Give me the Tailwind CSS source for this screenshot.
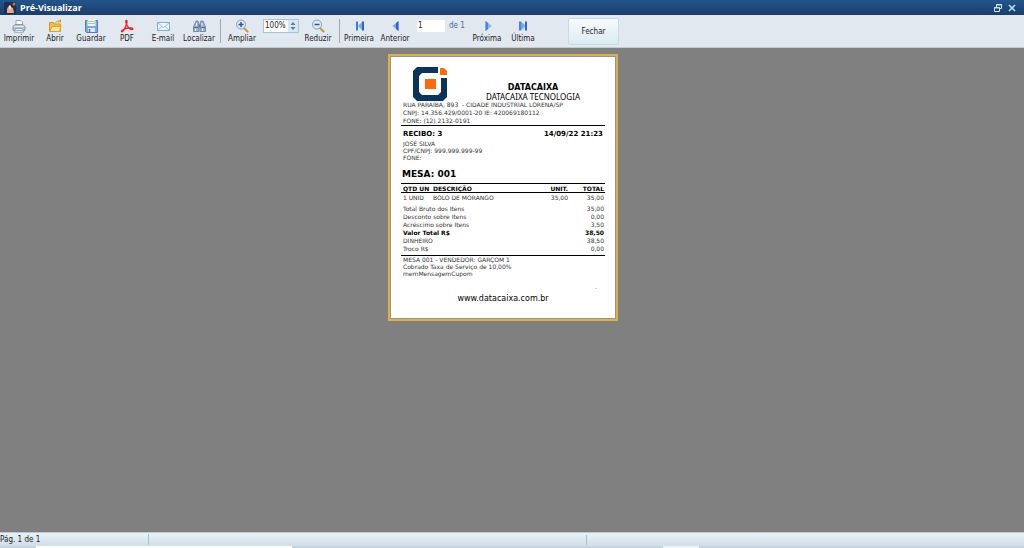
<!DOCTYPE html>
<html lang="pt-BR">
  <head>
    <title>Pré-Visualizar</title>
    <meta charset="UTF-8" />
    <meta name="viewport" content="width=device-width, initial-scale=1.0" />
    <script src="https://cdn.jsdelivr.net/npm/@tailwindcss/browser@4"></script>
  </head>
  <body class="flex flex-col h-screen overflow-hidden bg-[#808080] font-['DejaVu_Sans_Condensed','DejaVu_Sans',sans-serif] text-[8px] leading-[10px] text-[#1c1c1c]">
    <header class="flex items-center h-[15px] shrink-0 px-1 bg-linear-to-b from-[#23558b] to-[#1b3d6b] text-white">
      <svg class="w-3 h-3" viewBox="0 0 12 12">
        <rect width="12" height="12" rx="2" fill="#17324f" />
        <path d="M3 11V7l1-2 2-2 1 2 2 1 1 5z" fill="#f3a583" />
        <path d="M5 5l1-2 1 2-1 3z" fill="#fff" />
        <circle cx="10" cy="2" r="1.5" fill="#f26522" />
      </svg>
      <h1 class="ml-1 flex-1 font-['Open_Sans',sans-serif] text-[9px] font-bold">Pré-Visualizar</h1>
      <button type="button" aria-label="Restaurar" class="mr-1.5">
        <svg class="w-2 h-2" viewBox="0 0 8 8" fill="none" stroke="#c9e3ec">
          <path d="M2.5 3V.5h5v4H6M2 1h6" />
          <path d="M.5 3.5h5v4h-5zM0 4h6" />
        </svg>
      </button>
      <button type="button" aria-label="Fechar janela" class="mr-1">
        <svg class="w-2 h-2" viewBox="0 0 8 8" fill="none" stroke="#b9e0ea" stroke-width="1.6">
          <path d="M1 1l6 6M7 1L1 7" />
        </svg>
      </button>
    </header>

    <nav class="flex h-[33px] shrink-0 pl-px pt-1 bg-[#e1e8f0] border-b border-[#c3cad2]">
      <button type="button" class="flex flex-col items-center gap-px w-9 shrink-0">
        <svg class="w-3.5 h-3.5" viewBox="0 0 14 14">
          <path d="M4 6V1.500h5L10.500 3v3" fill="#fff" stroke="#86a6cf" />
          <path d="M3 5.500h8l2 2v3.500l-1 1H2l-1-1V7.500z" fill="#b9c1cd" stroke="#7c8694" stroke-width=".8" />
          <path d="M2 7.500h10" stroke="#e6eaf0" />
          <path d="M3.500 9.500h7l.8 3.800H2.700z" fill="#f4f9ff" stroke="#8594a8" stroke-width=".8" />
          <path d="M4 11.500h6" stroke="#7ab2ee" />
        </svg>
        <span>Imprimir</span>
      </button>
      <button type="button" class="flex flex-col items-center gap-px w-9 shrink-0">
        <svg class="w-3.5 h-3.5" viewBox="0 0 14 14">
          <path d="M1.500 12.500V3.500h4l1 1.500h6v7.500z" fill="#f3bd4b" stroke="#d9951f" />
          <path d="M1.500 12.500L4 7.500h9L11.500 12.500z" fill="#ffe59a" stroke="#dea02c" />
          <path d="M7.500 4c1-2 2.500-2.500 4.500-2M12.500.500v2.500H10" fill="none" stroke="#e58e1a" />
        </svg>
        <span>Abrir</span>
      </button>
      <button type="button" class="flex flex-col items-center gap-px w-9 shrink-0">
        <svg class="w-3.5 h-3.5" viewBox="0 0 14 14">
          <path d="M1.500 1.500h12v12h-11l-1-1z" fill="#7ca7e6" stroke="#5478c4" />
          <path d="M3.500 1h8v6h-8z" fill="#f0f6ee" />
          <path d="M4 2.500h7M4 4.500h7" stroke="#a5cda0" />
          <path d="M4 9h7v4H4z" fill="#dbe6f7" />
          <path d="M5.500 10v3" stroke="#5478c4" stroke-width="1.500" />
        </svg>
        <span>Guardar</span>
      </button>
      <button type="button" class="flex flex-col items-center gap-px w-9 shrink-0">
        <svg class="w-3.5 h-3.5" viewBox="0 0 14 14" fill="none" stroke="#e5252a" stroke-width="1.300">
          <path d="M6.500 1.500c-1.500 0-.5 3 1 5.500s3.500 4 5 3.500c1.500-1-1-2-4-1.500-3 .3-5 1.300-6.500 2.500-1.500 1.500.5 1.800 1.500 0C5 9.500 6.500 6 7 3.500c.2-1.300 0-2-.5-2z" />
        </svg>
        <span>PDF</span>
      </button>
      <button type="button" class="flex flex-col items-center gap-px w-9 shrink-0">
        <svg class="w-3.5 h-3.5" viewBox="0 0 14 14" fill="none">
          <rect x="1.500" y="3.500" width="12" height="8" fill="#edf5fd" stroke="#86addf" />
          <path d="M2 4l5.500 4.500L13 4M2 11l4-3.500M13 11L9 7.500" stroke="#9dc0ea" />
        </svg>
        <span>E-mail</span>
      </button>
      <button type="button" class="flex flex-col items-center gap-px w-9 shrink-0">
        <svg class="w-3.5 h-3.5" viewBox="0 0 14 14">
          <path d="M4 2h2l1 3v7.500H1.500V8zM9 2h2l2.500 6v4.500H8V5z" fill="#9db4cc" stroke="#5d7c9f" stroke-width=".8" />
          <path d="M6.500 5.500h2v3h-2z" fill="#5d7c9f" />
          <path d="M2 8.500h4M9 8.500h4" stroke="#47698f" />
          <path d="M3.500 9.500v2.500M10.500 9.500v2.500M4.500 4v2.500M10 4v2.500" stroke="#e8f1fa" />
        </svg>
        <span>Localizar</span>
      </button>
      <div class="w-px h-6 ml-[3px] shrink-0 bg-[#a3a9b1]"></div>
      <button type="button" class="flex flex-col items-center gap-px w-9 ml-[3px] shrink-0">
        <svg class="w-3.5 h-3.5" viewBox="0 0 14 14">
          <path d="M9.500 9.500l3 3" stroke="#c79a50" stroke-width="2.200" stroke-linecap="round" />
          <circle cx="6" cy="5.500" r="4.500" fill="#dceafb" stroke="#8b9bb0" />
          <path d="M3.500 5.500h5M6 3v5" stroke="#31568f" stroke-width="1.500" />
        </svg>
        <span>Ampliar</span>
      </button>
      <div class="flex w-9 h-3.5 ml-[3px] shrink-0 border border-[#a8c5da] bg-[#d6e7f2]">
        <input type="text" aria-label="Zoom" value="100%" class="w-6 min-w-0 pl-px bg-white text-[8px] leading-3 outline-none" />
        <button type="button" aria-label="Alterar zoom" class="flex flex-1 items-center justify-center">
          <svg class="w-1.5 h-2.5" viewBox="0 0 6 10" fill="#4f8099">
            <path d="M.5 4L3 1l2.500 3zM.5 6L3 9l2.500-3z" />
          </svg>
        </button>
      </div>
      <button type="button" class="flex flex-col items-center gap-px w-9 ml-px shrink-0">
        <svg class="w-3.5 h-3.5" viewBox="0 0 14 14">
          <path d="M9.500 9.500l3 3" stroke="#c79a50" stroke-width="2.200" stroke-linecap="round" />
          <circle cx="6" cy="5.500" r="4.500" fill="#dceafb" stroke="#8b9bb0" />
          <path d="M3.500 5.500h5" stroke="#31568f" stroke-width="1.500" />
        </svg>
        <span>Reduzir</span>
      </button>
      <div class="w-px h-6 ml-[3px] shrink-0 bg-[#a3a9b1]"></div>
      <button type="button" class="flex flex-col items-center gap-px w-9 ml-px shrink-0">
        <svg class="w-3.5 h-3.5" viewBox="0 0 14 14">
          <path d="M4 2.500h2v9H4z" fill="#3f7fdc" />
          <path d="M6 7l4.500-4.500v9z" fill="#79aaf0" />
          <path d="M10 2.500h2v9h-2z" fill="#2f67c8" />
        </svg>
        <span>Primeira</span>
      </button>
      <button type="button" class="flex flex-col items-center gap-px w-9 shrink-0">
        <svg class="w-3.5 h-3.5" viewBox="0 0 14 14">
          <path d="M10.500 2v10L4.500 7z" fill="#79aaf0" />
          <path d="M10.500 2v10L8 10V4z" fill="#2f67c8" />
        </svg>
        <span>Anterior</span>
      </button>
      <input type="text" aria-label="Página" value="1" class="w-7 h-3 ml-1 mt-px shrink-0 pl-px bg-white text-[8px] leading-3 outline-none" />
      <span class="w-5 ml-1 mt-0.5 shrink-0 text-[#456a94]">de 1</span>
      <button type="button" class="flex flex-col items-center gap-px w-9 shrink-0">
        <svg class="w-3.5 h-3.5" viewBox="0 0 14 14">
          <path d="M5.500 2v10L12 7z" fill="#8ab6f4" />
          <path d="M5.500 2v10L8 10V4z" fill="#4a83dc" />
        </svg>
        <span>Próxima</span>
      </button>
      <button type="button" class="flex flex-col items-center gap-px w-9 shrink-0">
        <svg class="w-3.5 h-3.5" viewBox="0 0 14 14">
          <path d="M3 2.500h2v9H3z" fill="#4a83dc" />
          <path d="M5 2.500v9L10 7z" fill="#79aaf0" />
          <path d="M9 2.500h2v9H9z" fill="#2f67c8" />
        </svg>
        <span>Última</span>
      </button>
      <button type="button" class="w-[51px] h-[27px] -mt-px ml-[27px] pt-px shrink-0 rounded-xs border border-[#c0dde6] bg-linear-to-b from-[#f7fafc] to-[#dcebf1]">Fechar</button>
    </nav>

    <main class="flex-1 min-h-0 pt-1.5 overflow-hidden">
      <article class="w-[230px] ml-[calc(50%-124px)] border-2 border-[#e3b040] bg-white font-['DejaVu_Sans',sans-serif] text-[6px] leading-[7px] text-[#333]">
        <div class="border border-[#8e93a5] px-2.5 pt-2.5 pb-3.5">
          <div class="flex items-end px-0.5">
            <svg class="w-[34px] h-[34px] ml-2.5" viewBox="0 0 34 34">
              <path d="M25 0H4L0 4v26l4 4h26l4-4V11h-6v14l-3 3H9l-3-3V9l3-3h16z" fill="#0b3558" />
              <path d="M27 1h4l3 3v4h-7z" fill="#ff6a0a" />
              <rect x="12" y="12" width="11" height="10" fill="#ff6a0a" />
            </svg>
            <div class="flex-1 pl-4 text-center text-black">
              <p class="text-[8px] leading-[9px] font-bold">DATACAIXA</p>
              <p class="text-[8px] leading-[9px] font-['Noto_Sans',sans-serif]">DATACAIXA TECNOLOGIA</p>
            </div>
          </div>
          <div class="px-0.5 leading-[8px]">
            <p class="whitespace-pre">RUA PARAÍBA, 893  - CIDADE INDUSTRIAL LORENA/SP</p>
            <p>CNPJ: 14.356.429/0001-20 IE: 420069180112</p>
            <p>FONE: (12) 2132-0191</p>
          </div>
          <div class="flex justify-between border-t border-black px-0.5 pt-1 text-[7px] leading-[9px] font-bold text-black">
            <span>RECIBO: 3</span>
            <span>14/09/22 21:23</span>
          </div>
          <div class="px-0.5 pt-px">
            <p>JOSÉ SILVA</p>
            <p>CPF/CNPJ: 999.999.999-99</p>
            <p>FONE:</p>
          </div>
          <h2 class="px-px pt-2 pb-1 text-[9px] leading-[10px] font-bold text-black">MESA: 001</h2>
          <table class="w-full table-fixed">
            <thead>
              <tr class="h-[9px] border-y border-black font-bold text-black">
                <th class="w-7 pl-0.5 text-left whitespace-nowrap">QTD UN</th>
                <th class="pl-1 text-left">DESCRIÇÃO</th>
                <th class="w-9 text-right pr-px">UNIT.</th>
                <th class="w-9 text-right pr-px">TOTAL</th>
              </tr>
            </thead>
            <tbody>
              <tr class="h-2.5">
                <td class="pl-0.5 whitespace-nowrap">1 UNID</td>
                <td class="pl-1">BOLO DE MORANGO</td>
                <td class="text-right pr-px">35,00</td>
                <td class="text-right pr-px">35,00</td>
              </tr>
            </tbody>
          </table>
          <dl class="grid grid-cols-2 pl-0.5 pr-px py-0.5 leading-[8px]">
            <dt>Total Bruto dos Itens</dt><dd class="text-right">35,00</dd>
            <dt>Desconto sobre Itens</dt><dd class="text-right">0,00</dd>
            <dt>Acréscimo sobre Itens</dt><dd class="text-right">3,50</dd>
            <dt class="font-bold text-black">Valor Total R$</dt><dd class="text-right font-bold text-black">38,50</dd>
            <dt>DINHEIRO</dt><dd class="text-right">38,50</dd>
            <dt>Troco R$</dt><dd class="text-right">0,00</dd>
          </dl>
          <div class="border-t border-black px-0.5">
            <p>MESA 001 - VENDEDOR: GARÇOM 1</p>
            <p>Cobrado Taxa de Serviço de 10,00%</p>
            <p>memMensagemCupom</p>
          </div>
          <p class="pr-2 pt-1.5 text-right">.</p>
          <p class="pt-1 text-center text-[8px] leading-[10px] text-black">www.datacaixa.com.br</p>
        </div>
      </article>
    </main>

    <footer class="shrink-0">
      <div class="flex items-center h-3.5 border-t border-[#b9c9d3] bg-linear-to-b from-[#e9f2f5] to-[#cfdfe9]">
        <span class="w-[149px] border-r border-[#a3c0d3] pt-px">Pág. 1 de 1</span>
        <span class="w-[438px] h-2.5 border-r border-[#a3c0d3]"></span>
      </div>
      <div class="flex h-0.5 bg-[#c8d3de]">
        <div class="w-64 ml-9 bg-white"></div>
        <div class="w-9 ml-auto mr-[325px] bg-[#eef2f6]"></div>
      </div>
    </footer>
  </body>
</html>
